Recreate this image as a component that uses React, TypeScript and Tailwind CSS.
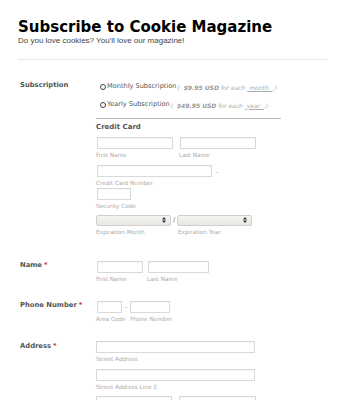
import React from "react"

const dv = { fontFamily: '"DejaVu Sans", Verdana, sans-serif' }

function Input({ w, className = "" }: { w: string; className?: string }) {
  return <div className={`h-[12px] border border-[#d9d9d9] bg-white shadow-[inset_0_1px_1px_rgba(0,0,0,0.04)] ${w} ${className}`} />
}

function Sub({ children, className = "" }: { children: React.ReactNode; className?: string }) {
  return (
    <div className={`mt-[2px] text-[5.7px] leading-[9px] text-[#aaa] whitespace-nowrap ${className}`} style={dv}>
      {children}
    </div>
  )
}

function Field({ w, label, className = "" }: { w: string; label: string; className?: string }) {
  return (
    <div className={`flex flex-col ${className}`}>
      <Input w={w} className="ml-px" />
      <Sub>{label}</Sub>
    </div>
  )
}

function Select({ w }: { w: string }) {
  return (
    <div className={`h-[10.5px] ${w} rounded-[2px] border border-[#cfcfcf] bg-gradient-to-b from-[#f6f5f2] to-[#e9e7e2] flex items-center justify-end pr-[4px]`}>
      <svg width="4" height="6" viewBox="0 0 4 6">
        <path d="M0 2.4 L2 0 L4 2.4 Z" fill="#333" />
        <path d="M0 3.6 L2 6 L4 3.6 Z" fill="#333" />
      </svg>
    </div>
  )
}

function Label({ children, req = false, className = "" }: { children: React.ReactNode; req?: boolean; className?: string }) {
  return (
    <div className={`w-[78px] shrink-0 pl-[2px] text-[6.8px] leading-[10px] font-bold text-[#555] whitespace-nowrap ${className}`} style={dv}>
      {children}
      {req && <span className="text-[#c33] ml-[2px]">*</span>}
    </div>
  )
}

function Radio({ name, price, period }: { name: string; price: string; period: string }) {
  return (
    <div className="h-[18px] flex items-center pl-[4px] whitespace-nowrap" style={dv}>
      <span className="w-[6px] h-[6px] rounded-full border border-[#444] bg-white mr-[1px]" />
      <span className="text-[6.6px] text-[#555]">{name}</span>
      <span className="text-[6px] italic text-[#aaa] ml-[1px]">
        (&nbsp; <b className="text-[#999]">{price}</b> for each <u>&nbsp;{period}&nbsp;&nbsp;</u>.)
      </span>
    </div>
  )
}

export default function App() {
  return (
    <div className="min-h-screen bg-white px-[18px] pt-[18px]">
      <h1 className="text-[15px] leading-[18px] font-bold text-black" style={dv}>
        Subscribe to Cookie Magazine
      </h1>
      <p className="text-[8px] leading-[10px] text-[#444]" style={{ fontFamily: '"Liberation Sans", Arial, sans-serif' }}>
        Do you love cookies? You'll love our magazine!
      </p>
      <div className="mt-[13px] h-px bg-[#e8e8e8]" />

      <div className="flex mt-[16px]">
        <Label className="pt-[4px]">Subscription</Label>
        <div className="flex flex-col pt-[2px]">
          <Radio name="Monthly Subscription" price="$9.95 USD" period="month" />
          <Radio name="Yearly Subscription" price="$49.95 USD" period="year" />
          <div className="mt-[4px] h-px w-[185px] bg-[#bbb]" />
          <div className="mt-[3px] text-[7px] leading-[10px] font-bold text-[#555]" style={dv}>
            Credit Card
          </div>
          <div className="mt-[5px] flex gap-[6px]">
            <Field w="w-[76px]" label="First Name" />
            <Field w="w-[76px]" label="Last Name" />
          </div>
          <div className="mt-[5px] flex flex-col">
            <div className="flex items-center">
              <Input w="w-[115px]" className="ml-px" />
              <span className="ml-[4px] text-[6px] text-[#888]" style={dv}>-</span>
            </div>
            <Sub>Credit Card Number</Sub>
          </div>
          <Field w="w-[34px]" label="Security Code" />
          <div className="mt-[4px] flex flex-col">
            <div className="flex items-center">
              <Select w="w-[75px]" />
              <span className="mx-[2px] text-[7px] leading-[10px] text-[#777]" style={dv}>/</span>
              <Select w="w-[75px]" />
            </div>
            <div className="flex">
              <Sub className="w-[82px]">Expiration Month</Sub>
              <Sub>Expiration Year</Sub>
            </div>
          </div>
        </div>
      </div>

      <div className="flex mt-[23px]">
        <Label req>Name</Label>
        <div className="flex gap-[4px] pt-[1px]">
          <Field w="w-[46px]" label="First Name" />
          <Field w="w-[61px]" label="Last Name" />
        </div>
      </div>

      <div className="flex mt-[16px]">
        <Label req>Phone Number</Label>
        <div className="flex flex-col pt-[1px]">
          <div className="flex items-center">
            <Input w="w-[25px]" className="ml-px" />
            <span className="mx-[3px] text-[6px] text-[#888]" style={dv}>-</span>
            <Input w="w-[40px]" />
          </div>
          <div className="flex">
            <Sub className="w-[34px]">Area Code</Sub>
            <Sub>Phone Number</Sub>
          </div>
        </div>
      </div>

      <div className="flex mt-[17px]">
        <Label req>Address</Label>
        <div className="flex flex-col">
          <Input w="w-[159px]" />
          <Sub>Street Address</Sub>
          <Input w="w-[159px]" className="mt-[5px]" />
          <Sub>Street Address Line 2</Sub>
          <div className="mt-[4px] flex gap-[7px]">
            <Input w="w-[76px]" />
            <Input w="w-[77px]" />
          </div>
        </div>
      </div>
    </div>
  )
}
